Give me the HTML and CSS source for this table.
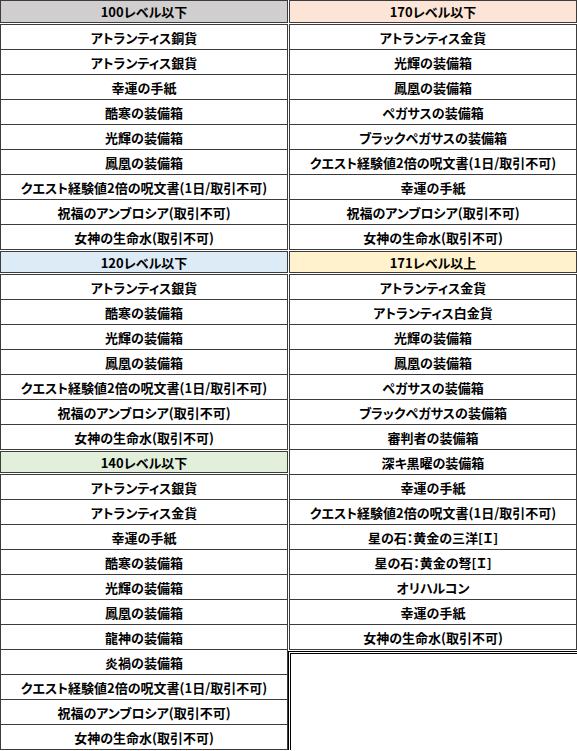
FILE: index.html
```html
<!DOCTYPE html>
<html lang="ja">
<head>
<meta charset="utf-8">
<link rel="stylesheet" href="styles.css">
</head>
<body>
<div class="page">
  <div class="col">
    <section class="grp">
      <div class="hd c-gray">100レベル以下</div>
      <ul class="items">
        <li>アトランティス銅貨</li>
        <li>アトランティス銀貨</li>
        <li>幸運の手紙</li>
        <li>酷寒の装備箱</li>
        <li>光輝の装備箱</li>
        <li>鳳凰の装備箱</li>
        <li>クエスト経験値2倍の呪文書(1日/取引不可)</li>
        <li>祝福のアンブロシア(取引不可)</li>
        <li>女神の生命水(取引不可)</li>
      </ul>
    </section>
    <section class="grp">
      <div class="hd c-blue">120レベル以下</div>
      <ul class="items">
        <li>アトランティス銀貨</li>
        <li>酷寒の装備箱</li>
        <li>光輝の装備箱</li>
        <li>鳳凰の装備箱</li>
        <li>クエスト経験値2倍の呪文書(1日/取引不可)</li>
        <li>祝福のアンブロシア(取引不可)</li>
        <li>女神の生命水(取引不可)</li>
      </ul>
    </section>
    <section class="grp">
      <div class="hd c-green">140レベル以下</div>
      <ul class="items">
        <li>アトランティス銀貨</li>
        <li>アトランティス金貨</li>
        <li>幸運の手紙</li>
        <li>酷寒の装備箱</li>
        <li>光輝の装備箱</li>
        <li>鳳凰の装備箱</li>
        <li>龍神の装備箱</li>
        <li>炎禍の装備箱</li>
        <li>クエスト経験値2倍の呪文書(1日/取引不可)</li>
        <li>祝福のアンブロシア(取引不可)</li>
        <li>女神の生命水(取引不可)</li>
      </ul>
    </section>
  </div>
  <div class="col">
    <section class="grp">
      <div class="hd c-peach">170レベル以下</div>
      <ul class="items">
        <li>アトランティス金貨</li>
        <li>光輝の装備箱</li>
        <li>鳳凰の装備箱</li>
        <li>ペガサスの装備箱</li>
        <li>ブラックペガサスの装備箱</li>
        <li>クエスト経験値2倍の呪文書(1日/取引不可)</li>
        <li>幸運の手紙</li>
        <li>祝福のアンブロシア(取引不可)</li>
        <li>女神の生命水(取引不可)</li>
      </ul>
    </section>
    <section class="grp">
      <div class="hd c-cream">171レベル以上</div>
      <ul class="items">
        <li>アトランティス金貨</li>
        <li>アトランティス白金貨</li>
        <li>光輝の装備箱</li>
        <li>鳳凰の装備箱</li>
        <li>ペガサスの装備箱</li>
        <li>ブラックペガサスの装備箱</li>
        <li>審判者の装備箱</li>
        <li>深キ黒曜の装備箱</li>
        <li>幸運の手紙</li>
        <li>クエスト経験値2倍の呪文書(1日/取引不可)</li>
        <li>星の石：黄金の三洋[Ｉ]</li>
        <li>星の石：黄金の弩[Ｉ]</li>
        <li>オリハルコン</li>
        <li>幸運の手紙</li>
        <li>女神の生命水(取引不可)</li>
      </ul>
    </section>
    <div class="rest"></div>
  </div>
</div>
</body>
</html>
```
FILE: styles.css
```css
html, body {
  margin: 0;
  padding: 0;
  background: #fff;
}
body {
  font-family: "Noto Sans CJK JP", "Noto Sans", sans-serif;
  font-size: 13px;
  font-weight: bold;
  color: #000;
  font-feature-settings: "palt";
  overflow: hidden;
  height: 751px;
}
.page {
  display: grid;
  grid-template-columns: 288px 288px;
  column-gap: 1px;
  width: 577px;
}
.col {
  display: flex;
  flex-direction: column;
}
.grp {
  display: flex;
  flex-direction: column;
}
.hd {
  height: 23px;
  box-sizing: border-box;
  border: 1px solid #3c3c3c;
  margin-bottom: 1px;
  display: flex;
  align-items: center;
  justify-content: center;
  line-height: 1;
}
.grp + .grp .hd {
  height: 22px;
  margin-top: 1px;
}
.c-gray { background: #d0cece; }
.c-peach { background: #fce4d6; }
.c-blue { background: #ddebf7; }
.c-cream { background: #fff2cc; }
.c-green { background: #e2efda; }
.items {
  list-style: none;
  margin: 0;
  padding: 0;
  border-top: 1px solid #3c3c3c;
}
.items li {
  height: 25px;
  box-sizing: border-box;
  border: 1px solid #3c3c3c;
  border-top: 0;
  display: flex;
  align-items: center;
  justify-content: center;
  line-height: 1;
}
.rest {
  flex: 1;
  margin-top: 1px;
  margin-left: -1px;
  border-top: 3px double #000;
  border-left: 3px double #000;
}
```
